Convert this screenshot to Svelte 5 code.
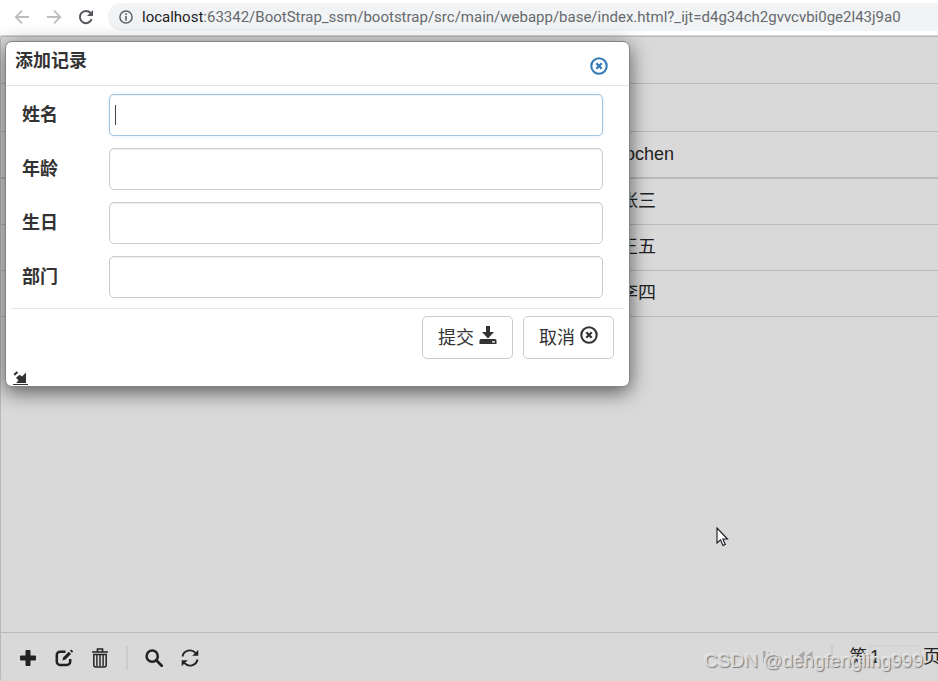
<script>
  const url = 'localhost';
  const rest = ':63342/BootStrap_ssm/bootstrap/src/main/webapp/base/index.html?_ijt=d4g34ch2gvvcvbi0ge2l43j9a0';
  const names = ['张三', '王五', '李四'];
  const fields = [
    { id: 'name', label: '姓名' },
    { id: 'age', label: '年龄' },
    { id: 'birthday', label: '生日' },
    { id: 'dept', label: '部门' }
  ];
</script>

{#snippet remove(size)}
  <svg width={size} height={size} viewBox="0 0 18 18" aria-hidden="true">
    <circle cx="9" cy="9" r="7.7" fill="none" stroke="currentColor" stroke-width="2.1" />
    <path d="M6.300 6.300l5.400 5.400M11.700 6.300l-5.400 5.400" stroke="currentColor" stroke-width="2.300" />
  </svg>
{/snippet}

<div class="window">
  <header class="browser">
    <button class="nav" aria-label="Back">
      <svg width="16" height="16" viewBox="0 0 16 16"><path d="M15 8H2M8 1.700L1.700 8 8 14.300" fill="none" stroke="#bcbdbf" stroke-width="1.800" /></svg>
    </button>
    <button class="nav" aria-label="Forward">
      <svg width="16" height="16" viewBox="0 0 16 16"><path d="M1 8h13M8 1.700L14.300 8 8 14.300" fill="none" stroke="#bcbdbf" stroke-width="1.800" /></svg>
    </button>
    <button class="nav" aria-label="Reload">
      <svg width="16" height="16" viewBox="0 0 16 16"><path d="M13.700 10.200A6.100 6.100 0 1 1 12.600 4" fill="none" stroke="#55585c" stroke-width="2" /><path d="M15 1v6H9z" fill="#55585c" /></svg>
    </button>
    <div class="address">
      <svg width="14" height="14" viewBox="0 0 14 14" aria-hidden="true"><circle cx="7" cy="7" r="6.100" fill="none" stroke="#5f6368" stroke-width="1.500" /><path d="M6.200 3.300h1.600v1.600H6.200zM6.200 6.100h1.600v4.600H6.200z" fill="#5f6368" /></svg>
      <span class="url"><span class="host">{url}</span>{rest}</span>
    </div>
  </header>

  <main class="grid">
    <div class="band"></div>
    <div class="band"></div>
    <table>
      <thead><tr><th class="lead"></th><th>xiaochen</th><th class="tail"></th></tr></thead>
      <tbody>
        {#each names as name}
          <tr><td></td><td>{name}</td><td></td></tr>
        {/each}
      </tbody>
    </table>
    <div class="empty"></div>
    <footer class="pager">
      <div class="tools">
        <button aria-label="Add"><svg width="18" height="18" viewBox="0 0 18 18"><path d="M7 1.500h4v5.500h5.500v4h-5.500v5.500H7v-5.500H1.500V7H7z" fill="currentColor" stroke="currentColor" stroke-linejoin="round" /></svg></button>
        <button aria-label="Edit"><svg width="18" height="18" viewBox="0 0 18 18"><path d="M10.500 2.700H5A3.200 3.200 0 0 0 1.800 5.900v6.800A3.200 3.200 0 0 0 5 15.900h7a3.200 3.200 0 0 0 3.200-3.200V10" fill="none" stroke="currentColor" stroke-width="2.500" /><path d="M7.400 11.500l.9-3.200 5.500-5.500 2.200 2.200-5.500 5.500z" fill="currentColor" /><path d="M15 1.800l1.300-1.300 1.900 1.900-1.300 1.300z" fill="currentColor" /></svg></button>
        <button aria-label="Delete"><svg width="18" height="20" viewBox="0 0 18 20"><path d="M1 4h16M6.500 3.500V1h5v2.500" fill="none" stroke="currentColor" stroke-width="1.600" /><path d="M2.800 6.500h12.400V17q0 2-2 2H4.800q-2 0-2-2z" fill="none" stroke="currentColor" stroke-width="1.500" /><path d="M5.900 7v11M9 7v11M12.100 7v11" stroke="currentColor" stroke-width="1.400" /></svg></button>
        <span class="sep"></span>
        <button aria-label="Search"><svg width="18" height="18" viewBox="0 0 18 18"><circle cx="7.200" cy="7.200" r="5.600" fill="none" stroke="currentColor" stroke-width="2.500" /><path d="M11.300 11.300l5.400 5.400" stroke="currentColor" stroke-width="2.800" stroke-linecap="round" /></svg></button>
        <button aria-label="Refresh"><svg width="18" height="18" viewBox="0 0 18 18"><path d="M1.500 7.500A7.600 7.600 0 0 1 14.500 3.800M16.500 10.500A7.600 7.600 0 0 1 3.500 14.200" fill="none" stroke="currentColor" stroke-width="1.900" /><path d="M17.300.8v6h-6zM.7 17.200v-6h6z" fill="currentColor" /></svg></button>
      </div>
      <nav class="pages">
        <button class="off" aria-label="First page"><svg width="14" height="14" viewBox="0 0 14 14"><path d="M1 1h2.500v5L8 1.500v4.500L12.500 1.500v11L8 8v4.500L3.500 8v5H1z" fill="currentColor" /></svg></button>
        <button class="off" aria-label="Previous page"><svg width="16" height="14" viewBox="0 0 16 14"><path d="M0 7l7.500-6v12zM8 7l7.500-6v12z" fill="currentColor" /></svg></button>
        <span class="sep"></span>
        <label for="page">第</label>
        <input id="page" value="1" />
        <span>页</span>
      </nav>
    </footer>
  </main>

  <section class="dialog" role="dialog" aria-labelledby="title">
    <header class="head">
      <h1 id="title">添加记录</h1>
      <button class="close" aria-label="Close">{@render remove(18)}</button>
    </header>
    <form onsubmit={(e) => e.preventDefault()}>
      {#each fields as field, i}
        <div class="field">
          <label for={field.id}>{field.label}</label>
          <div class="box">
            <input id={field.id} type="text" class:active={i === 0} />
            {#if i === 0}<span class="caret"></span>{/if}
          </div>
        </div>
      {/each}
      <div class="actions">
        <button type="submit">提交
          <svg width="18" height="18" viewBox="0 0 18 18" aria-hidden="true"><path d="M7 0h4v6h4L9 12.500 3 6h4z" fill="currentColor" /><path fill-rule="evenodd" d="M2 13h14q1.500 0 1.500 1.500V18H.5v-3.500Q.5 13 2 13zM13 15.200v1.200h3v-1.200z" fill="currentColor" /></svg>
        </button>
        <button type="button">取消
          {@render remove(18)}
        </button>
      </div>
    </form>
    <div class="grip">
      <svg width="15" height="14" viewBox="0 0 15 14" aria-hidden="true"><path d="M13 1.500V12H3l2.500-2.500L3 6.700l3.500-3 2.500 1.800z" fill="currentColor" /><path d="M1.200 3.800l3.300-2.800" stroke="currentColor" stroke-width="2.200" /><path d="M0 13.500h15" stroke="currentColor" /></svg>
    </div>
  </section>

  <svg class="cursor" width="13" height="20" viewBox="0 0 13 20" aria-hidden="true"><path d="M1 1v15l3.500-3.200 2.500 5.700 2.300-1-2.500-5.500h4.700z" fill="#fff" stroke="#15151d" stroke-width="1.100" /></svg>
  <span class="watermark">CSDN @dengfengling999</span>
</div>

<style>
  .window {
    position: relative;
    display: flex;
    flex-direction: column;
    min-height: 100vh;
    overflow: hidden;
    background: #d9d9d9;
    color: #222;
    font: 18px/26px 'Liberation Sans', 'Noto Sans CJK SC', sans-serif;
  }
  button, input {
    box-sizing: border-box;
    margin: 0;
    padding: 0;
    border: 0;
    background: none;
    color: inherit;
    font: inherit;
  }
  svg { display: block; flex: none; }

  .browser {
    display: flex;
    align-items: center;
    height: 35px;
    padding: 0 0 1px 14px;
    box-sizing: border-box;
    background: #fff;
  }
  .nav { width: 16px; margin-right: 16px; }
  .address {
    display: flex;
    align-items: center;
    flex: 1;
    min-width: 0;
    height: 28px;
    margin: -1px 0 0 -2px;
    padding-left: 11px;
    gap: 9px;
    border-radius: 14px 0 0 14px;
    background: #f1f3f4;
  }
  .url {
    white-space: nowrap;
    color: #666a6e;
    font: 15px/20px Roboto, 'Open Sans', sans-serif;
  }
  .host { color: #202124; }

  .grid {
    display: flex;
    flex-direction: column;
    flex: 1;
    margin-top: 1px;
    border: solid #b9b9b9;
    border-width: 1px 0 0 1px;
    border-radius: 4px 0 0 4px;
  }
  .band { height: 46px; border-bottom: 1px solid #b9b9b9; }
  .band + .band { height: 47px; }
  table { width: 100%; border-collapse: separate; border-spacing: 0; table-layout: fixed; }
  th, td {
    height: 43px;
    padding: 0 0 2px;
    border-bottom: 1px solid #b9b9b9;
    font-weight: normal;
    text-align: center;
  }
  th { border-bottom-width: 2px; }
  .lead { width: 537px; }
  th:nth-child(2) { width: 200px; }
  .empty { flex: 1; }
  .pager {
    display: flex;
    justify-content: space-between;
    height: 48px;
    border-top: 1px solid #b9b9b9;
  }
  .tools, .pages { display: flex; align-items: center; }
  .tools { gap: 18px; padding: 2px 0 0 18px; }
  .sep { flex: none; width: 2px; height: 24px; background: #cbcbcb; }
  .tools .sep { margin: 0 -1px; }
  .pages { width: 179px; gap: 16px; white-space: nowrap; overflow: hidden; }
  .pages .off { display: flex; justify-content: center; flex: none; width: 20px; color: #a8a8a8; }
  .pages label { flex: none; }
  .pages input {
    flex: none;
    width: 52px;
    height: 24px;
    border: 1px solid #cfcfcf;
    border-radius: 4px;
    margin: 0 -14px;
  }

  .dialog {
    position: absolute;
    top: 41px;
    left: 5px;
    width: 625px;
    max-width: calc(100% - 10px);
    box-sizing: border-box;
    border: 1px solid #858585;
    border-radius: 7px;
    background: #fff;
    color: #333;
    box-shadow: 0 5px 20px rgba(0, 0, 0, 0.6);
  }
  .head {
    display: flex;
    justify-content: space-between;
    height: 43px;
    padding: 0 21px 0 9px;
    border-bottom: 1px solid #e5e5e5;
  }
  h1 { margin: 6px 0 0; font-size: 18px; line-height: 26px; }
  .close { color: #337ab7; height: 48px; }
  form { padding: 8px 5px 0; }
  .field { display: flex; align-items: center; margin-bottom: 12px; padding: 0 21px 0 11px; }
  .field label { width: 87px; font-weight: bold; }
  .box { position: relative; flex: 1; }
  .box input {
    display: block;
    width: 100%;
    height: 42px;
    padding: 0 6px;
    border: 1px solid #ccc;
    border-radius: 5px;
    background: #fff;
    box-shadow: inset 0 1px 1px rgba(0, 0, 0, 0.075);
    outline: none;
  }
  .box input.active { border-color: #a3c2de; box-shadow: inset 0 1px 1px rgba(0, 0, 0, 0.06), 0 0 4px #e0eef9; }
  .caret { position: absolute; left: 6px; top: 11px; width: 1px; height: 20px; background: #444; }
  .actions {
    display: flex;
    justify-content: flex-end;
    gap: 10px;
    margin-top: -2px;
    padding: 7px 10px 12px 0;
    border-top: 1px solid #e8e8e8;
  }
  .actions button {
    display: flex;
    align-items: center;
    justify-content: center;
    gap: 5px;
    width: 91px;
    height: 43px;
    border: 1px solid #ccc;
    border-radius: 5px;
    line-height: 38px;
  }
  .actions svg { margin-bottom: 6px; }
  .grip { padding: 0 0 1px 7px; }

  .cursor { position: absolute; left: 716px; top: 527px; }
  .watermark {
    position: absolute;
    right: 15px;
    bottom: 7px;
    font-size: 19px;
    color: #dadada;
    text-shadow: 1px 1px 1px #777, -1px -1px 0 #e8e8e8;
    white-space: nowrap;
  }
</style>
